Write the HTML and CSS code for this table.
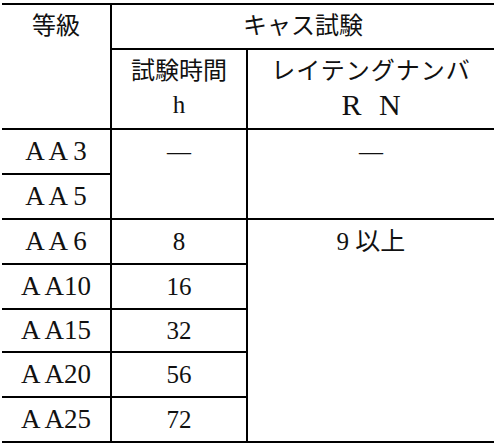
FILE: index.html
```html
<!DOCTYPE html>
<html lang="ja">
<head>
<meta charset="utf-8">
<title>キャス試験</title>
<link rel="stylesheet" href="styles.css">
</head>
<body>
<table class="spec">
  <colgroup>
    <col class="c-grade">
    <col class="c-time">
    <col class="c-rn">
  </colgroup>
  <thead>
    <tr>
      <th rowspan="2" class="cell">等級</th>
      <th colspan="2" class="cell">キャス試験</th>
    </tr>
    <tr>
      <th class="cell sub">試験時間<br><span class="unit">h</span></th>
      <th class="cell sub"><span class="kana">レイテングナンバ</span><br><span class="rn">R N</span></th>
    </tr>
  </thead>
  <tbody>
    <tr>
      <td class="cell grade">A A 3</td>
      <td rowspan="2" class="cell">—</td>
      <td rowspan="2" class="cell">—</td>
    </tr>
    <tr><td class="cell grade">A A 5</td></tr>
    <tr>
      <td class="cell grade">A A 6</td>
      <td class="cell num">8</td>
      <td rowspan="5" class="cell num">9 以上</td>
    </tr>
    <tr><td class="cell grade">A A10</td><td class="cell num">16</td></tr>
    <tr class="short"><td class="cell grade">A A15</td><td class="cell num">32</td></tr>
    <tr><td class="cell grade">A A20</td><td class="cell num">56</td></tr>
    <tr><td class="cell grade">A A25</td><td class="cell num">72</td></tr>
  </tbody>
</table>
</body>
</html>
```
FILE: styles.css
```css
html, body {
  margin: 0;
  padding: 0;
  background: #fff;
}

body {
  font-family: "Liberation Serif", "Noto Sans CJK JP", serif;
  font-size: 24px;
  color: #111;
}

.spec {
  border-collapse: collapse;
  table-layout: fixed;
  width: 492px;
  margin: 3px 0 0 2px;
  border-top: 2px solid #000;
  border-bottom: 2px solid #000;
  border-left: hidden;
  border-right: hidden;
}

.c-grade { width: 109px; }
.c-time { width: 136px; }
.c-rn { width: 247px; }

.cell {
  border: 2px solid #000;
  padding: 0;
  text-align: center;
  vertical-align: top;
  font-weight: normal;
  line-height: 43px;
  height: 43px;
}

.sub {
  line-height: 34px;
  padding: 4px 0;
  height: 68px;
}

.kana {
  letter-spacing: 1px;
}

.unit {
  font-size: 25px;
}

.rn {
  font-size: 30px;
  letter-spacing: 5px;
  margin-right: -5px;
}

.grade {
  font-size: 27px;
}

.num {
  font-size: 25px;
}

.short .cell {
  height: 41px;
  line-height: 41px;
}
```
